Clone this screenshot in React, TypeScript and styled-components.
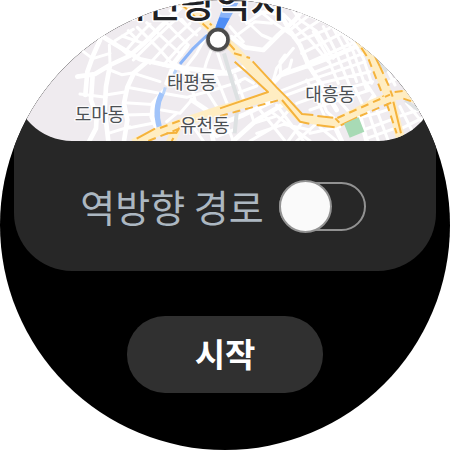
import React, { useState } from "react";
import styled, { createGlobalStyle } from "styled-components";

const GlobalStyle = createGlobalStyle`
  body {
    margin: 0;
    background: #fff;
    font-family: "Noto Sans CJK KR", "Noto Sans", sans-serif;
  }
`;

const WatchFace = styled.main`
  display: flex;
  flex-direction: column;
  align-items: center;
  gap: 45px;
  width: min(100vw, 100vh);
  aspect-ratio: 1;
  margin: 0 auto;
  clip-path: circle(50%);
  background: #000;
`;

const RouteCard = styled.section`
  align-self: stretch;
  margin: 0 14px;
  overflow: hidden;
  border-radius: 0 0 58px 58px;
  background: #272727;
`;

const MapView = styled.svg`
  display: block;
  width: 100%;
  height: 141px;
  border-radius: 0 0 58px 58px;
  background: #efebef;
`;

const DistrictName = styled.text`
  font-size: 54px;
  fill: #4c5054;
  stroke: #fff;
  stroke-width: 8px;
  stroke-opacity: 0.8;
  stroke-linejoin: round;
  paint-order: stroke;
`;

const CityName = styled.text`
  font-size: 114px;
  font-weight: 500;
  fill: #202124;
  stroke: #fff;
  stroke-width: 9px;
  stroke-linejoin: round;
  paint-order: stroke;
`;

const OptionRow = styled.label`
  display: flex;
  align-items: center;
  justify-content: center;
  gap: 15px;
  height: 130px;
  padding-right: 4px;
  box-sizing: border-box;
  color: #acb7c1;
  font-size: 38px;
  line-height: 48px;
  cursor: pointer;
`;

const Toggle = styled.input`
  appearance: none;
  display: flex;
  align-items: center;
  box-sizing: border-box;
  width: 87px;
  height: 49px;
  margin: 0;
  border: 2px solid #929292;
  border-radius: 25px;
  cursor: pointer;

  &::before {
    content: "";
    box-sizing: border-box;
    flex: none;
    width: 53px;
    height: 53px;
    margin: 0 -2px;
    border: 2px solid #929292;
    border-radius: 50%;
    background: #fafafa;
  }

  &:checked {
    justify-content: flex-end;
    background: #3e91ff;
  }
`;

const StartButton = styled.button`
  padding: 13px 68px 16px;
  border: 0;
  border-radius: 38px;
  background: #303030;
  color: #fff;
  font: inherit;
  font-size: 33px;
  font-weight: 700;
  line-height: 48px;
  cursor: pointer;
`;

const wideStreets = [
  "M285 95L340 130L420 178L500 196L560 205L690 220",
  "M300 120L280 165L262 215L256 285",
  "M232 230L285 222L330 195L388 168L432 130L500 62L545 20",
  "M330 195L318 260L314 330L325 423",
  "M278 225L273 300L290 350L288 385L268 423",
  "M440 186L402 218L382 262L372 310L382 360L372 423",
  "M490 275L460 310L455 350L470 385",
  "M695 112L735 142L790 150L835 105L885 60L905 35",
  "M800 270L842 225L930 195L1010 165L1090 130",
  "M830 20L868 90L900 135L925 195L965 255L1010 330",
  "M560 140L525 185L500 250",
  "M520 190L575 228L690 218L735 200",
  "M575 300L620 330L640 423",
  "M655 375L730 345L815 305",
  "M700 423L770 360L855 310",
  "M1120 290L1080 350L1100 423",
  "M1005 380L1025 423",
];

const narrowStreets = [
  "M250 155L278 176L330 160M328 135L330 190M345 130L388 168",
  "M366 108L430 130M385 92L410 118M412 82L440 110L480 150L515 190",
  "M440 68L485 110L545 165M480 48L520 90L565 135M510 32L590 105",
  "M400 180L440 140L525 60M450 190L500 135L570 70M490 196L540 140L600 85",
  "M375 155L420 102L450 72M545 58L565 82M345 122L400 88",
  "M402 220L480 245M382 262L490 282M374 308L470 314M378 345L460 343M382 385L465 368M325 400L390 380",
  "M330 210L365 224L402 218M318 285L374 276M240 282L318 292M285 355L315 350",
  "M620 105L590 160L555 205M640 135L620 185L610 220M650 150L665 195L674 220",
  "M540 205L570 245L585 300M605 225L618 270L650 320M645 225L665 270L685 320",
  "M490 280L560 292L640 270L720 245M485 330L540 340L575 300M500 365L530 340",
  "M540 380L520 423M565 360L610 423M620 370L650 410L700 390M675 360L700 423",
  "M700 250L735 235L760 250M710 280L770 258M705 225L735 310M740 300L760 360",
  "M690 80L730 125M720 45L785 105L820 120M740 70L790 35L840 45",
  "M698 115L765 65L815 70M770 25L825 70L875 105M850 42L930 120L985 185",
  "M875 25L900 60L948 92L1000 175M900 35L980 70L1060 125M870 90L928 45M880 112L960 60",
  "M893 125L988 85M905 160L1025 100M920 190L1055 130M938 219L1090 160",
  "M880 145L830 205L815 258M842 225L840 185L855 165M842 220L868 205L875 180",
  "M940 95L975 155L1015 250M970 80L1005 150L1050 260M1000 85L1040 160L1070 245",
  "M1020 90L1060 155L1100 270M1050 110L1090 175L1115 250",
  "M845 272L915 245L1095 185M860 285L950 252L1110 215M890 310L960 285L1118 245",
  "M960 285L980 335L1000 352M920 240L945 285L972 345M1015 300L1060 350",
  "M1065 265L1090 320M1095 245L1125 290M930 330L985 310L1110 270",
  "M780 330L855 423M830 315L910 423M865 332L820 382L750 423",
  "M910 362L865 423M950 370L890 423M760 370L825 350M770 400L850 373L930 390",
  "M820 340L930 423M960 382L1010 423M930 400L1020 380",
  "M1105 335L1135 423M1130 330L1165 423M1070 355L1130 340L1175 325M1090 390L1185 355M1100 415L1200 380",
  "M1200 320L1245 410M1220 310L1265 365M1195 350L1255 330M1205 385L1265 355",
  "M1140 165L1185 255M1115 170L1165 160M1128 210L1195 190M1145 255L1215 225",
];

const avenues = [
  "M540 0L600 55L650 100L700 145L760 210L830 280L900 353L1005 370L1110 315L1170 290L1220 282L1262 306",
  "M400 430L470 397L540 370L660 330L830 283",
  "M1070 110L1110 165L1140 225L1175 310L1205 430",
  "M535 375L510 430",
];

const avenueEdges = [
  "M704 185L740 217L804 276L660 325",
  "M758 184L830 262L860 292L906 342L940 345",
  "M846 300L900 365L928 371M952 348L1000 353M950 375L1004 382",
  "M1022 376L1072 352M1006 355L1018 368",
  "M410 416L465 386",
  "M1084 143L1100 168M1070 125L1094 140M1122 164L1140 200",
  "M1180 305L1203 400M500 400L530 398",
];

const dashedEdges = [
  "M550 18L638 98M600 45L635 76",
  "M445 423L535 387M480 384L545 360M540 380L515 423M660 348L838 300",
  "M1012 354L1170 284M1080 348L1180 305",
  "M1106 178L1150 290M1140 200L1166 257L1178 290M688 132L704 150M702 160L750 174",
  "M1184 276L1218 272L1240 288M1210 296L1260 312M1160 310L1190 400",
];

function CityMap() {
  return (
    <MapView
      viewBox="42 0 1266 423"
      preserveAspectRatio="xMidYMid slice"
      role="img"
      aria-label="대전광역시 지도"
    >
      <g fill="none" stroke="#fff" strokeLinecap="round" strokeLinejoin="round">
        <path strokeWidth="14" d={wideStreets.join("")} />
        <path strokeWidth="9" d={narrowStreets.join("")} />
      </g>
      <g fill="none" strokeLinejoin="round">
        <path stroke="#dde1e2" strokeWidth="12" d="M672 160L695 240L714 300L704 400" />
        <path stroke="#dde1e2" strokeWidth="10" d="M1120 165L1160 215M1215 300L1255 330" />
        <path stroke="#8ab4f8" strokeWidth="9" d="M622 105L580 145L540 192" />
        <path stroke="#b9d4fb" strokeWidth="9" d="M528 210L522 222M496 262L490 282" />
        <path stroke="#a1c4fa" strokeWidth="16" d="M486 280Q462 325 478 382" />
        <path stroke="#ffedc2" strokeWidth="27" d={avenues.join("")} />
        <path stroke="#f5b33c" strokeWidth="6" d={avenueEdges.join("")} />
        <path stroke="#f5b33c" strokeWidth="6" strokeDasharray="24 15" d={dashedEdges.join("")} />
      </g>
      <path fill="#a8dab5" d="M1032 371L1076 352L1093 395L1049 413Z" />
      <path fill="#8ab4f8" d="M676 0L720 0L671 88L646 83Z" />
      <path fill="#4e8df5" d="M658 52L689 55L671 88L646 83Z" />
      <CityName x="332" y="51">대전광역시</CityName>
      <circle cx="654" cy="120" r="38" fill="#000" fillOpacity=".12" />
      <circle cx="654" cy="119" r="30" fill="#fff" stroke="#4b4b4b" strokeWidth="11" />
      <DistrictName x="501" y="268">태평동</DistrictName>
      <DistrictName x="224" y="364">도마동</DistrictName>
      <DistrictName x="540" y="396">유천동</DistrictName>
      <DistrictName x="916" y="303">대흥동</DistrictName>
    </MapView>
  );
}

export default function App() {
  const [reversed, setReversed] = useState(false);

  return (
    <>
      <GlobalStyle />
      <WatchFace>
        <RouteCard>
          <CityMap />
          <OptionRow htmlFor="reverse-route">
            역방향 경로
            <Toggle
              id="reverse-route"
              type="checkbox"
              role="switch"
              checked={reversed}
              onChange={(event) => setReversed(event.target.checked)}
            />
          </OptionRow>
        </RouteCard>
        <StartButton type="button">시작</StartButton>
      </WatchFace>
    </>
  );
}
